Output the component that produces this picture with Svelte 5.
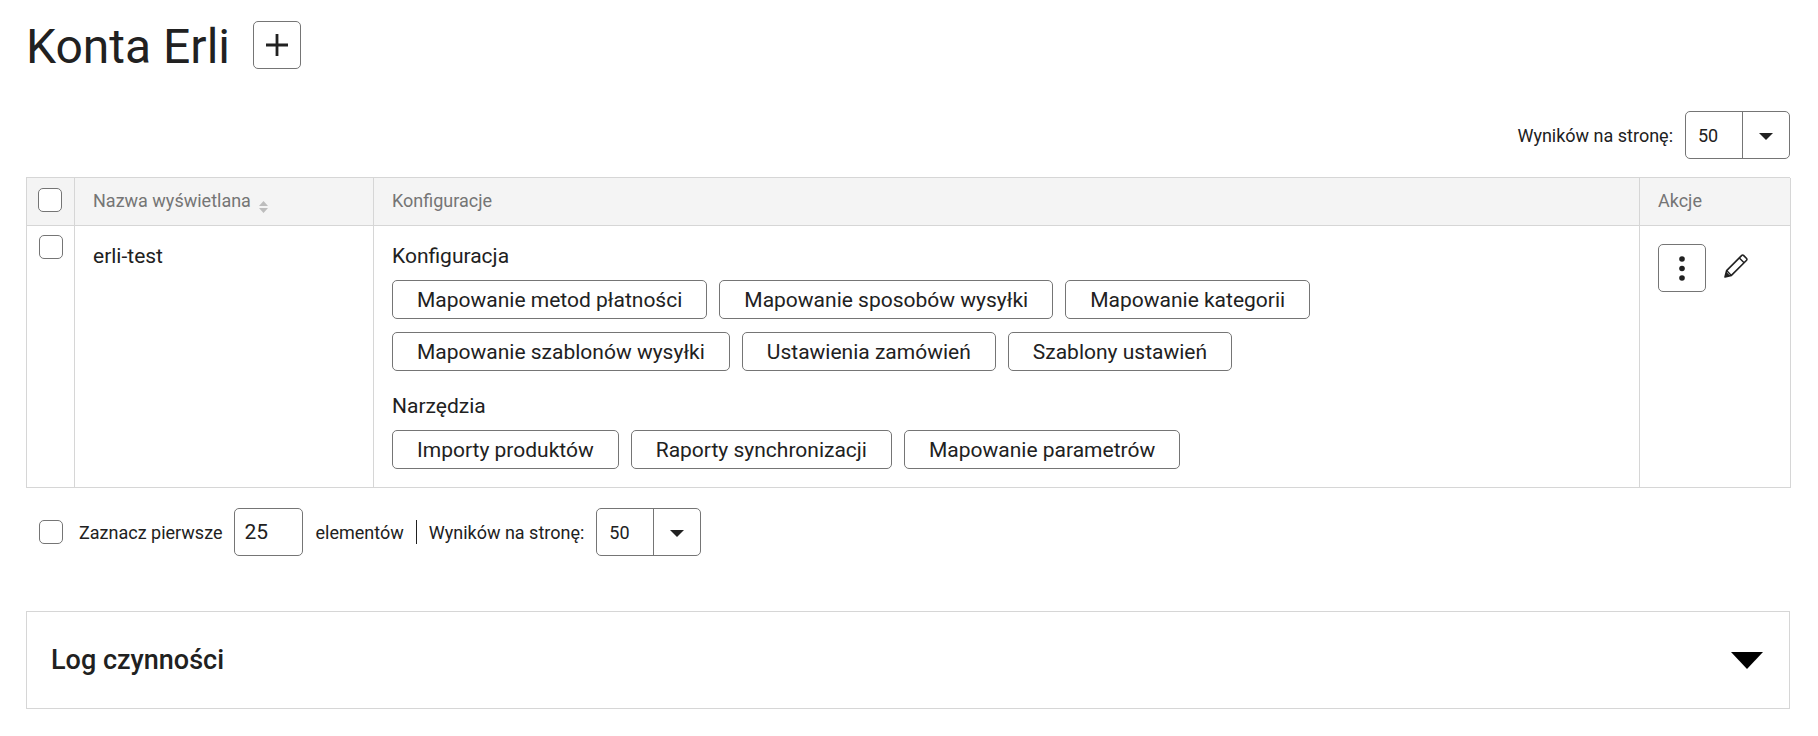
<script lang="ts">
  const configButtons = [
    'Mapowanie metod płatności',
    'Mapowanie sposobów wysyłki',
    'Mapowanie kategorii',
    'Mapowanie szablonów wysyłki',
    'Ustawienia zamówień',
    'Szablony ustawień',
  ];
  const toolButtons = ['Importy produktów', 'Raporty synchronizacji', 'Mapowanie parametrów'];
</script>

<div class="page">
  <header class="title-row">
    <h1>Konta Erli</h1>
    <button class="icon-btn add-btn" aria-label="Dodaj">
      <svg width="24" height="24" viewBox="0 0 24 24"><path d="M12 1v22M1 12h22" stroke="#212121" stroke-width="2.800" fill="none" /></svg>
    </button>
  </header>

  <div class="per-page top">
    <span>Wyników na stronę:</span>
    <div class="select">
      <span class="select-value">50</span>
      <span class="select-arrow"></span>
    </div>
  </div>

  <div class="table">
    <div class="cell head check-cell"><span class="checkbox"></span></div>
    <div class="cell head">Nazwa wyświetlana
      <svg class="sort" width="9" height="12" viewBox="0 0 9 12"><path d="M4.500 0 9 5H0zM0 7h9l-4.500 5z" fill="#bdbdbd" /></svg>
    </div>
    <div class="cell head">Konfiguracje</div>
    <div class="cell head last">Akcje</div>

    <div class="cell body check-cell row-check"><span class="checkbox"></span></div>
    <div class="cell body name">erli-test</div>
    <div class="cell body config">
      <div class="group-label">Konfiguracja</div>
      <div class="chips">
        {#each configButtons as label}
          <button class="chip">{label}</button>
        {/each}
      </div>
      <div class="group-label second">Narzędzia</div>
      <div class="chips">
        {#each toolButtons as label}
          <button class="chip">{label}</button>
        {/each}
      </div>
    </div>
    <div class="cell body last actions">
      <button class="icon-btn" aria-label="Więcej">
        <svg width="6" height="26" viewBox="0 0 6 26"><circle cx="3" cy="4" r="2.800" fill="#212121" /><circle cx="3" cy="13.500" r="2.800" fill="#212121" /><circle cx="3" cy="23" r="2.800" fill="#212121" /></svg>
      </button>
      <svg class="pencil" width="24" height="24" viewBox="0 0 24 24">
        <path d="M1 23l1.600-6.400L17.800 1.400a1.200 1.200 0 0 1 1.700 0l3.100 3.100a1.200 1.200 0 0 1 0 1.700L7.400 21.400z" fill="none" stroke="#212121" stroke-width="1.600" stroke-linejoin="round" />
        <path d="M15.300 3.900l4.800 4.800M2.600 16.600l4.800 4.800" fill="none" stroke="#212121" stroke-width="1.400" />
        <path d="M1 23l1.300-5.200 3.900 3.900z" fill="#212121" />
      </svg>
    </div>
  </div>

  <div class="footer-row">
    <span class="checkbox"></span>
    <span class="select-first">Zaznacz pierwsze</span>
    <div class="count-input">25</div>
    <span class="elements">elementów</span>
    <span class="divider"></span>
    <span class="per-label">Wyników na stronę:</span>
    <div class="select small">
      <span class="select-value">50</span>
      <span class="select-arrow"></span>
    </div>
  </div>

  <section class="log">
    <h2>Log czynności</h2>
    <span class="log-arrow"></span>
  </section>
</div>

<style>
  :global(body) {
    margin: 0;
    background: #fff;
  }

  .page {
    font-family: Roboto, sans-serif;
    color: #212121;
    padding: 21px 28px 0 26px;
  }

  .title-row {
    display: flex;
    align-items: flex-start;
    gap: 23px;
    height: 48px;
  }

  h1 {
    margin: 0;
    padding-top: 2px;
    font-size: 48px;
    font-weight: 400;
    line-height: 48px;
  }

  .icon-btn {
    width: 48px;
    height: 48px;
    padding: 0;
    display: flex;
    align-items: center;
    justify-content: center;
    background: #fff;
    border: 1px solid #757575;
    border-radius: 5px;
  }

  .per-page {
    display: flex;
    align-items: center;
    font-size: 18px;
  }

  .per-page.top {
    justify-content: flex-end;
    gap: 12px;
    margin-top: 42px;
  }

  .select {
    width: 105px;
    height: 48px;
    box-sizing: border-box;
    display: flex;
    align-items: stretch;
    border: 1px solid #757575;
    border-radius: 5px;
    font-size: 18px;
  }

  .select-value {
    flex: 1;
    display: flex;
    align-items: center;
    padding-left: 12px;
    border-right: 1px solid #757575;
  }

  .select-arrow {
    width: 46px;
    position: relative;
  }

  .select-arrow::after {
    content: '';
    position: absolute;
    left: 16px;
    top: 21px;
    border-left: 7px solid transparent;
    border-right: 7px solid transparent;
    border-top: 7px solid #212121;
  }

  .table {
    display: grid;
    grid-template-columns: 48px 299px 1266px 151px;
    margin-top: 18px;
    border-top: 1px solid #d6d6d6;
    border-left: 1px solid #d6d6d6;
    width: 1764px;
    box-sizing: border-box;
  }

  .cell {
    border-right: 1px solid #d6d6d6;
    border-bottom: 1px solid #d6d6d6;
    box-sizing: border-box;
  }

  .head {
    height: 48px;
    background: #f4f4f4;
    color: #757575;
    font-size: 18px;
    display: flex;
    align-items: center;
    padding: 0 18px 2px;
    white-space: nowrap;
  }

  .sort {
    margin: 13px 0 0 8px;
  }

  .check-cell {
    padding: 0 0 3px 11px;
  }

  .checkbox {
    display: block;
    width: 24px;
    height: 24px;
    box-sizing: border-box;
    border: 1px solid #757575;
    border-radius: 5px;
    background: #fff;
    flex: none;
  }

  .row-check {
    padding: 9px 0 0 12px;
  }

  .body {
    height: 262px;
  }

  .name {
    padding: 18px 18px 0;
    font-size: 21px;
    line-height: 25px;
  }

  .config {
    padding: 18px 18px 0;
  }

  .group-label {
    font-size: 21px;
    line-height: 24px;
  }

  .group-label.second {
    margin-top: 23px;
  }

  .chips {
    display: flex;
    flex-wrap: wrap;
    gap: 13px 12px;
    margin-top: 12px;
  }

  .chip {
    height: 39px;
    padding: 0 24px;
    background: #fff;
    border: 1px solid #757575;
    border-radius: 5px;
    font-family: inherit;
    font-size: 21px;
    color: #212121;
  }

  .actions {
    display: flex;
    align-items: flex-start;
    gap: 18px;
    padding: 18px 18px 0;
  }

  .pencil {
    margin-top: 10px;
  }

  .footer-row {
    display: flex;
    align-items: center;
    margin-top: 20px;
    padding-left: 13px;
    font-size: 18px;
    height: 48px;
  }

  .select-first {
    margin-left: 16px;
  }

  .count-input {
    width: 69px;
    height: 48px;
    box-sizing: border-box;
    margin-left: 12px;
    padding-left: 9px;
    display: flex;
    align-items: center;
    border: 1px solid #757575;
    border-radius: 5px;
    font-size: 21px;
  }

  .elements {
    margin-left: 12px;
  }

  .divider {
    width: 1px;
    height: 24px;
    background: #212121;
    margin: 0 12px;
  }

  .select.small {
    margin-left: 12px;
  }

  .log {
    margin-top: 55px;
    height: 98px;
    box-sizing: border-box;
    border: 1px solid #d6d6d6;
    display: flex;
    align-items: center;
    justify-content: space-between;
    padding: 0 26px 0 24px;
  }

  h2 {
    margin: 0;
    font-size: 27px;
    font-weight: 500;
  }

  .log-arrow {
    border-left: 16px solid transparent;
    border-right: 16px solid transparent;
    border-top: 17px solid #000;
  }
</style>
